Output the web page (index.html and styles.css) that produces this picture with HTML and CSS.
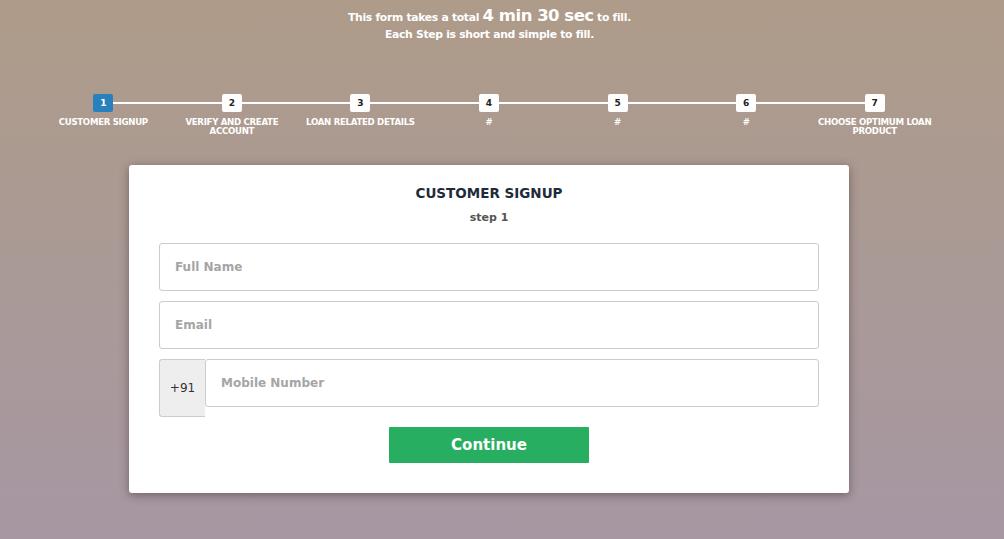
FILE: index.html
```html
<!DOCTYPE html>
<html lang="en">
<head>
<meta charset="utf-8">
<title>Customer Signup</title>
<link rel="stylesheet" href="styles.css">
</head>
<body>
<div class="page">
  <header class="intro">
    <p class="intro-line">This form takes a total <span class="big">4 min 30 sec</span> to fill.</p>
    <p class="intro-line">Each Step is short and simple to fill.</p>
  </header>

  <ol class="steps">
    <li class="step active"><span class="num">1</span><span class="label">CUSTOMER SIGNUP</span></li>
    <li class="step"><span class="num">2</span><span class="label">VERIFY AND CREATE ACCOUNT</span></li>
    <li class="step"><span class="num">3</span><span class="label">LOAN RELATED DETAILS</span></li>
    <li class="step"><span class="num">4</span><span class="label">#</span></li>
    <li class="step"><span class="num">5</span><span class="label">#</span></li>
    <li class="step"><span class="num">6</span><span class="label">#</span></li>
    <li class="step"><span class="num">7</span><span class="label">CHOOSE OPTIMUM LOAN PRODUCT</span></li>
  </ol>

  <main class="card">
    <h1 class="card-title">CUSTOMER SIGNUP</h1>
    <p class="card-sub">step 1</p>
    <form class="form">
      <input class="field" type="text" placeholder="Full Name">
      <input class="field" type="email" placeholder="Email">
      <div class="phone">
        <span class="prefix">+91</span>
        <input class="field phone-field" type="tel" placeholder="Mobile Number">
      </div>
      <button class="btn" type="button">Continue</button>
    </form>
  </main>
</div>
</body>
</html>
```

FILE: styles.css
```css
* { box-sizing: border-box; }
html, body { margin: 0; padding: 0; height: 100%; }
body {
  background: linear-gradient(to bottom, #ae9b89 0%, #aa9a96 50%, #a697a3 100%);
  font-family: "DejaVu Sans", "Open Sans", sans-serif;
  color: #fff;
  min-height: 539px;
}
.page {
  width: 979px;
  padding-top: 7px;
}
.intro { text-align: center; }
.intro-line {
  margin: 0;
  font-size: 10.8px;
  font-weight: bold;
  line-height: 17px;
  letter-spacing: -0.3px;
}
.intro-line .big { font-size: 16.5px; letter-spacing: -0.5px; }

.steps {
  list-style: none;
  margin: 51px 0 0 39px;
  padding: 0;
  width: 900px;
  display: grid;
  grid-template-columns: repeat(7, 1fr);
  position: relative;
}
.steps::before {
  content: "";
  position: absolute;
  left: 64px;
  right: 64px;
  top: 8px;
  height: 2px;
  background: #fff;
}
.step {
  display: flex;
  flex-direction: column;
  align-items: center;
  position: relative;
}
.num {
  width: 20px;
  height: 18px;
  background: #fff;
  color: #222;
  border-radius: 2px;
  font-size: 9px;
  font-weight: bold;
  display: flex;
  align-items: center;
  justify-content: center;
}
.step.active .num { background: #2a7fbd; color: #fff; }
.label {
  margin-top: 6px;
  max-width: 122px;
  text-align: center;
  font-size: 8.6px;
  font-weight: bold;
  line-height: 9px;
  letter-spacing: -0.3px;
}

.card {
  margin: 29px 0 0 129px;
  width: 720px;
  background: #fff;
  border-radius: 3px;
  box-shadow: 0 2px 10px rgba(60, 40, 40, 0.5);
  padding: 19px 30px 30px;
  color: #333;
}
.card-title {
  margin: 0;
  text-align: center;
  font-size: 13.5px;
  font-weight: 600;
  color: #1f2b3a;
  line-height: 18px;
}
.card-sub {
  margin: 9px 0 0;
  text-align: center;
  font-size: 11px;
  font-weight: bold;
  color: #555;
  line-height: 14px;
}
.form {
  margin-top: 18px;
  display: flex;
  flex-direction: column;
  gap: 10px;
}
.field {
  display: block;
  width: 100%;
  height: 48px;
  border: 1px solid #ccc;
  border-radius: 3px;
  padding: 0 15px;
  font-family: inherit;
  font-size: 12px;
  font-weight: bold;
  color: #333;
  outline: none;
}
.field::placeholder { color: #a5a5a5; }
.phone {
  display: flex;
  align-items: flex-start;
}
.prefix {
  flex: none;
  width: 46px;
  height: 58px;
  background: #eee;
  border: 1px solid #ccc;
  border-right: 0;
  border-radius: 3px 0 0 3px;
  display: flex;
  align-items: center;
  justify-content: center;
  font-size: 12px;
  color: #333;
}
.phone-field { flex: 1; }
.btn {
  align-self: center;
  width: 200px;
  height: 36px;
  border: 0;
  border-radius: 1px;
  background: #27ae60;
  color: #fff;
  font-family: inherit;
  font-size: 15px;
  font-weight: bold;
  cursor: pointer;
}
```
